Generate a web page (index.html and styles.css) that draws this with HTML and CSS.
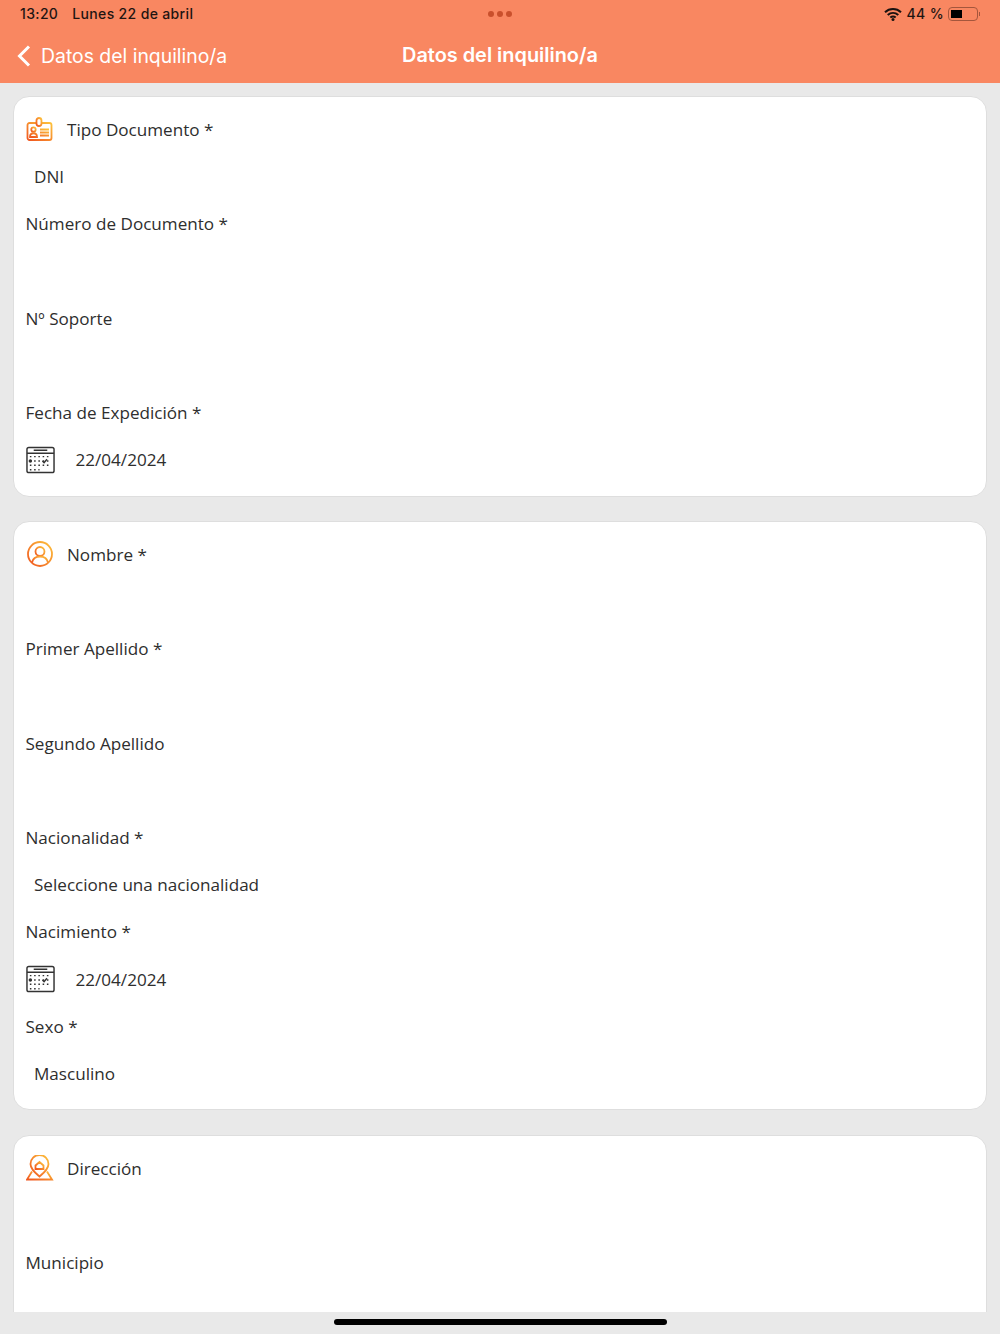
FILE: index.html
```html
<!DOCTYPE html>
<html lang="es">
<head>
  <meta charset="UTF-8" />
  <meta name="viewport" content="width=device-width, initial-scale=1.0"/>
  <title>Datos del inquilino/a</title>
  <link rel="stylesheet" href="styles.css">
</head>
<body>
  <header class="top">
    <div class="status">
      <div class="status-left"><span>13:20</span><span>Lunes 22 de abril</span></div>
      <div class="dots"><i></i><i></i><i></i></div>
      <div class="status-right">
        <svg class="wifi" width="18" height="14" viewBox="0 0 18 14">
          <path d="M1 5.2C5.6 .9 12.4 .9 17 5.2M3.7 8C6.8 5.2 11.2 5.2 14.3 8M6.3 10.6C7.9 9.2 10.1 9.2 11.7 10.6" fill="none" stroke="#1a1210" stroke-width="2"/>
          <circle cx="9" cy="12.4" r="1.5" fill="#1a1210"/>
        </svg>
        <span>44 %</span>
        <div class="battery"><div class="battery-level"></div></div>
        <div class="battery-tip"></div>
      </div>
    </div>
    <div class="nav">
      <a class="back">
        <svg width="14" height="22" viewBox="0 0 14 22"><path d="M12 1.5L2.5 11L12 20.5" fill="none" stroke="#fff" stroke-width="3"/></svg>
        <span>Datos del inquilino/a</span>
      </a>
      <h1>Datos del inquilino/a</h1>
    </div>
  </header>

  <main class="content">
    <section class="card">
      <div class="row">
        <svg class="icon" width="28" height="26" viewBox="0 0 28 26">
          <defs>
            <linearGradient id="naranja" x1="0" y1="1" x2="1" y2="0">
              <stop offset="0" stop-color="#f0561f"/>
              <stop offset="1" stop-color="#fdc23c"/>
            </linearGradient>
          </defs>
          <g fill="none" stroke="url(#naranja)" stroke-width="1.8">
            <rect x="1.5" y="6" width="24" height="17" rx="2"/>
            <rect x="10.5" y="1" width="5" height="8" rx="2.5" fill="#fff"/>
            <circle cx="7.5" cy="12.5" r="2.2"/>
            <path d="M4 20c0-5 7-5 7 0zM14 12.5h9M14 15.5h9M14 18.5h9"/>
          </g>
        </svg>
        <span class="label">Tipo Documento *</span>
      </div>
      <div class="row value">DNI</div>
      <div class="row label">Número de Documento *</div>
      <div class="row"></div>
      <div class="row label">Nº Soporte</div>
      <div class="row"></div>
      <div class="row label">Fecha de Expedición *</div>
      <div class="row">
        <svg class="cal" width="29" height="28" viewBox="0 0 30 28">
          <g fill="none" stroke="#333" stroke-width="1.5">
            <rect x="1" y="1" width="28" height="26" rx="2"/>
            <path d="M1 7h28M8 4h14"/>
            <path d="M4 10.5h22M4 15h22M4 19.5h22M4 24h10" stroke-dasharray="1.6 2.8"/>
          </g>
          <circle cx="4.5" cy="15" r="1.8" fill="#333"/>
          <path d="M17 15l1.7 1.7 3-3.4" fill="none" stroke="#333" stroke-width="1.5"/>
        </svg>
        <span class="date">22/04/2024</span>
      </div>
    </section>

    <section class="card">
      <div class="row">
        <svg class="icon" width="28" height="26" viewBox="0 0 28 26">
          <g fill="none" stroke="url(#naranja)" stroke-width="1.8">
            <circle cx="14" cy="13" r="12"/>
            <circle cx="14" cy="10.5" r="4.5"/>
            <path d="M6 21.5c1-4.5 4-6 8-6s7 1.5 8 6"/>
          </g>
        </svg>
        <span class="label">Nombre *</span>
      </div>
      <div class="row"></div>
      <div class="row label">Primer Apellido *</div>
      <div class="row"></div>
      <div class="row label">Segundo Apellido</div>
      <div class="row"></div>
      <div class="row label">Nacionalidad *</div>
      <div class="row value">Seleccione una nacionalidad</div>
      <div class="row label">Nacimiento *</div>
      <div class="row">
        <svg class="cal" width="29" height="28" viewBox="0 0 30 28">
          <g fill="none" stroke="#333" stroke-width="1.5">
            <rect x="1" y="1" width="28" height="26" rx="2"/>
            <path d="M1 7h28M8 4h14"/>
            <path d="M4 10.5h22M4 15h22M4 19.5h22M4 24h10" stroke-dasharray="1.6 2.8"/>
          </g>
          <circle cx="4.5" cy="15" r="1.8" fill="#333"/>
          <path d="M17 15l1.7 1.7 3-3.4" fill="none" stroke="#333" stroke-width="1.5"/>
        </svg>
        <span class="date">22/04/2024</span>
      </div>
      <div class="row label">Sexo *</div>
      <div class="row value">Masculino</div>
    </section>

    <section class="card">
      <div class="row">
        <svg class="icon" width="28" height="26" viewBox="0 0 28 26">
          <g fill="none" stroke="url(#naranja)" stroke-width="1.8">
            <path d="M13.5 21.5c-4.5-4-9-7.5-9-12.5a9 9 0 0 1 18 0c0 5-4.5 8.5-9 12.5z"/>
            <path d="M9.5 10.5l4-3.5 4 3.5v3.5h-8z"/>
            <path d="M6 16.5l-5 8h25l-5-8"/>
          </g>
        </svg>
        <span class="label">Dirección</span>
      </div>
      <div class="row"></div>
      <div class="row label">Municipio</div>
      <div class="row"></div>
    </section>
  </main>

  <footer class="home-bar"><div class="home-indicator"></div></footer>
</body>
</html>
```

FILE: styles.css
```css
body {
  font-family: 'Open Sans', sans-serif;
  background-color: #e9e9e9;
  color: #333;
  display: flex;
  flex-direction: column;
  height: 1334px;
  margin: 0;
  overflow: hidden;
}

.top {
  background-color: #f98761;
  height: 83px;
  flex: none;
}

.status {
  display: grid;
  grid-template-columns: 1fr auto 1fr;
  align-items: center;
  height: 27px;
  padding: 0 20px;
  font-family: 'Inter', sans-serif;
  font-size: 14px;
  font-weight: 500;
  letter-spacing: 0.35px;
  color: #1f1512;
}

.status-left {
  display: flex;
  gap: 14px;
}

.status-right {
  display: flex;
  align-items: center;
  justify-content: flex-end;
  gap: 5px;
}

.dots {
  display: flex;
  gap: 3px;
}

.dots i {
  width: 6px;
  height: 6px;
  border-radius: 50%;
  background-color: #c9502c;
}

.battery {
  width: 30px;
  height: 14px;
  border: 1px solid #a5563c;
  border-radius: 4px;
  padding: 2px;
  box-sizing: border-box;
  margin-left: -1px;
}

.battery-level {
  width: 11px;
  height: 100%;
  background-color: #000;
}

.battery-tip {
  width: 1px;
  height: 4px;
  background-color: #a5563c;
  margin-left: -4px;
}

.nav {
  display: flex;
  align-items: center;
  justify-content: center;
  height: 56px;
  position: relative;
}

.nav h1 {
  margin: 0;
  font-family: 'Inter', sans-serif;
  font-size: 19.9px;
  font-weight: 600;
  color: #fff;
}

.back {
  position: absolute;
  left: 17px;
  top: 17px;
  display: flex;
  align-items: center;
  gap: 10px;
  font-family: 'Inter', sans-serif;
  font-size: 19.4px;
  color: #fff;
}

.content {
  flex: 1;
  min-height: 0;
  overflow: hidden;
  background-color: #e9e9e9;
  padding: 13px 13px 0;
  display: flex;
  flex-direction: column;
  gap: 24.4px;
}

.card {
  flex: none;
  background: #fff;
  border: 1px solid #dedede;
  border-radius: 16px;
  padding: 9px 12px 12px 11.5px;
}

.row {
  height: 47.2px;
  display: flex;
  align-items: center;
  font-size: 17.1px;
  color: #2e2e2e;
}

.icon {
  margin-right: 13px;
  margin-left: 0.5px;
  flex: none;
}

.value {
  padding-left: 8.5px;
}

.cal {
  flex: none;
  margin-right: 21px;
}

.home-bar {
  flex: none;
  height: 22px;
  padding-bottom: 2px;
  box-sizing: border-box;
  display: flex;
  justify-content: center;
  align-items: center;
}

.home-indicator {
  width: 333px;
  height: 6px;
  background-color: #000;
  border-radius: 3px;
}
```
